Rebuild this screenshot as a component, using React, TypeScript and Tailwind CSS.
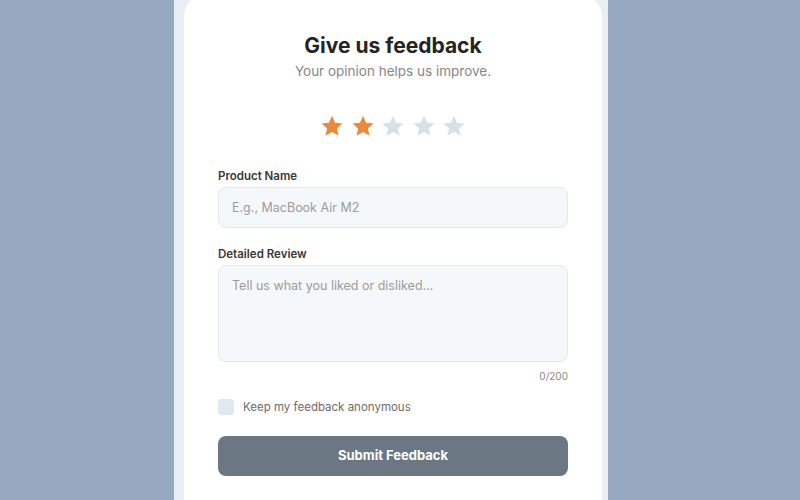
import { useState } from "react"

const Star = ({ filled }: { filled: boolean }) => (
  <svg viewBox="0 0 24 24" className="w-6 h-6">
    <path
      d="M12 1.8l3.1 6.9 7.4.7-5.6 5 1.7 7.4L12 17.9l-6.6 3.9 1.7-7.4-5.6-5 7.4-.7z"
      fill={filled ? "#ec8a3c" : "#d7e1ea"}
    />
  </svg>
)

export default function App() {
  const [rating, setRating] = useState(2)
  const [review, setReview] = useState("")
  const [anon, setAnon] = useState(false)

  return (
    <div className="h-[500px] overflow-hidden bg-[#97a9c1] flex justify-center font-['Inter',sans-serif]">
      <div className="ml-[-18px] pl-[10px] pr-[6px] bg-[#e8eef4] h-[560px] mt-[-20px]">
        <div className="w-[418px] h-full bg-white rounded-[20px] mt-[16px] pt-[36px] px-[34px] flex flex-col">
          <h1 className="text-[21px] leading-7 font-bold text-[#242424] text-center">Give us feedback</h1>
          <p className="mt-[1px] text-[13.5px] leading-5 text-[#8a8784] text-center">Your opinion helps us improve.</p>

          <div className="mt-[33px] flex justify-center gap-[6.5px]">
            {[1, 2, 3, 4, 5].map((i) => (
              <button key={i} onClick={() => setRating(i)}>
                <Star filled={i <= rating} />
              </button>
            ))}
          </div>

          <label className="mt-[30px] text-[11.5px] leading-4 font-semibold text-[#3d3733]">Product Name</label>
          <input
            type="text"
            placeholder="E.g., MacBook Air M2"
            className="mt-[3px] h-[41px] w-full rounded-lg bg-[#f4f8fb] border border-[#e2e8ef] px-[13px] text-[12.5px] text-[#333] placeholder:text-[#9c9b9a] outline-none"
          />

          <label className="mt-[18px] text-[11.5px] leading-4 font-semibold text-[#3d3733]">Detailed Review</label>
          <textarea
            value={review}
            onChange={(e) => setReview(e.target.value.slice(0, 200))}
            placeholder="Tell us what you liked or disliked..."
            className="mt-[3px] h-[97px] w-full resize-none rounded-lg bg-[#f4f8fb] border border-[#e2e8ef] px-[13px] py-[10px] text-[12.5px] leading-5 text-[#333] placeholder:text-[#9c9b9a] outline-none"
          />
          <div className="mt-[7px] text-right text-[10px] leading-[14px] text-[#8d8a87]">{review.length}/200</div>

          <label className="mt-[16px] flex items-center gap-[9px] cursor-pointer">
            <span
              onClick={() => setAnon(!anon)}
              className={"w-4 h-4 rounded-[4px] " + (anon ? "bg-[#6c7784]" : "bg-[#e2e8f0]")}
            />
            <span className="text-[11.5px] leading-4 text-[#6f6b68]">Keep my feedback anonymous</span>
          </label>

          <button className="mt-[21px] h-[40px] w-full rounded-lg bg-[#6c7784] text-white text-[13px] font-bold">
            Submit Feedback
          </button>
        </div>
      </div>
    </div>
  )
}
